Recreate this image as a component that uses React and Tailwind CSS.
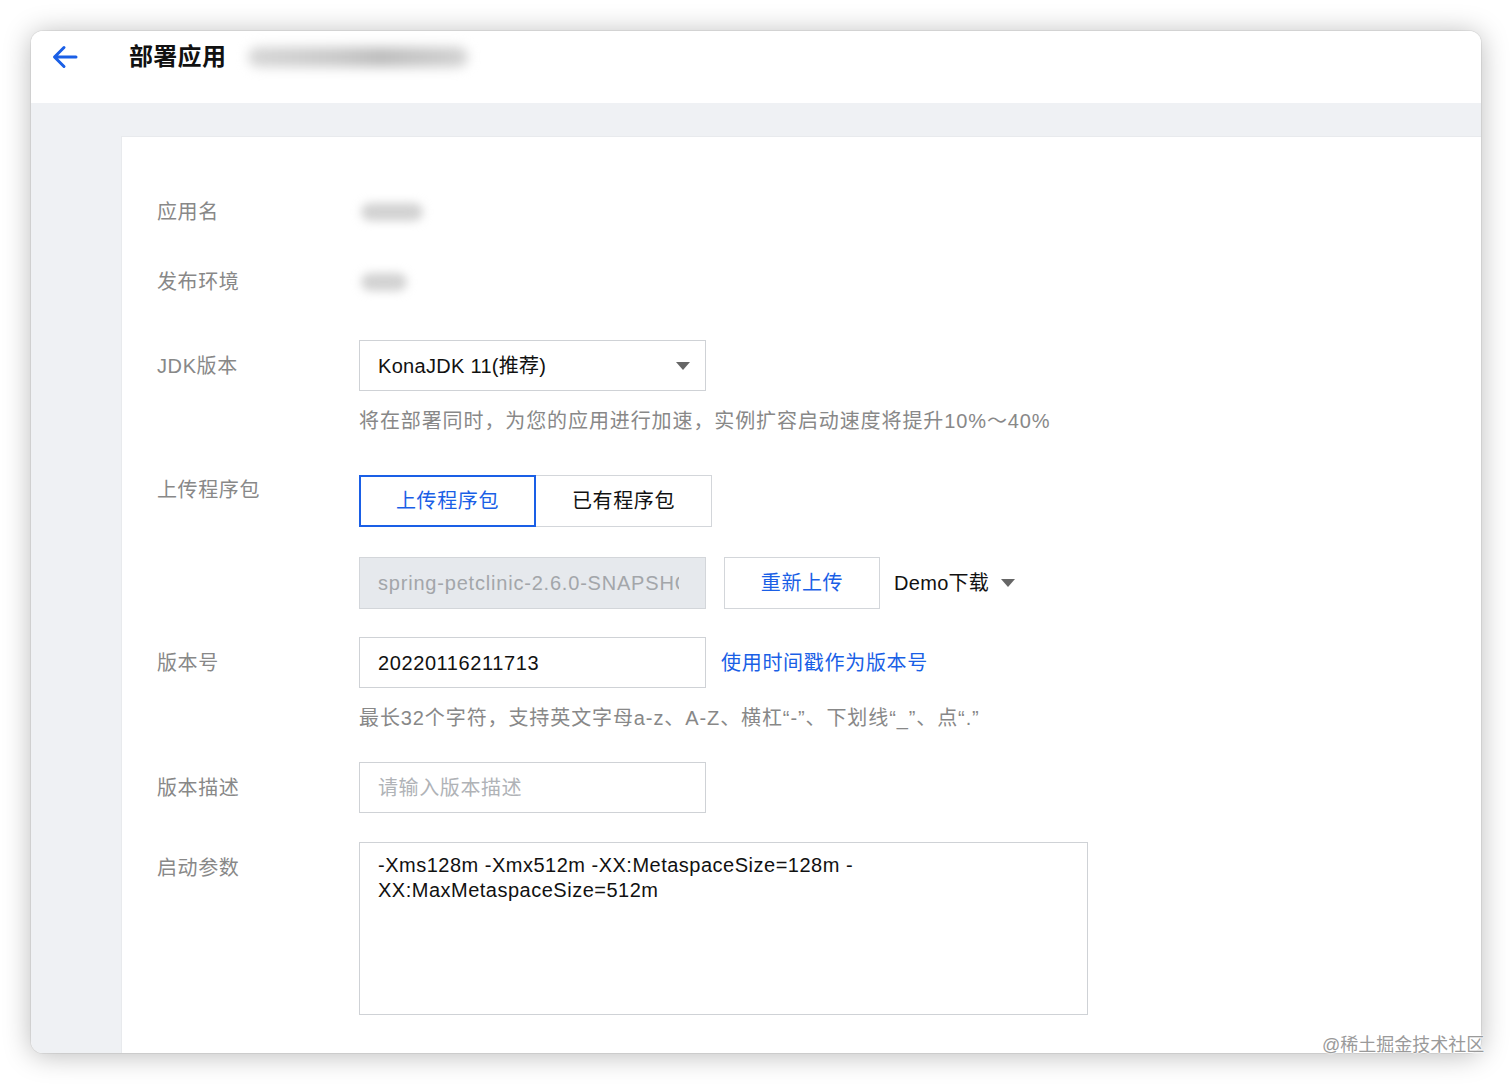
import React from "react";

const FONT = { fontFamily: '"Liberation Sans", "Noto Sans CJK SC", sans-serif' };

function Caret({ className = "" }) {
  return (
    <svg width="14" height="8" viewBox="0 0 14 8" className={className}>
      <path d="M0 0 L14 0 L7 8 Z" fill="#666" />
    </svg>
  );
}

function Label({ children, className = "" }) {
  return (
    <div className={`w-[202px] shrink-0 text-[20px] leading-[28px] text-[#888] tracking-[0.6px] ${className}`}>{children}</div>
  );
}

export default function App() {
  return (
    <div className="w-[1512px] h-[1084px] bg-white p-[31px] relative" style={FONT}>
      <div className="w-full h-full rounded-[12px] overflow-hidden bg-white flex flex-col shadow-[0_2px_28px_rgba(0,0,0,0.28),0_0_0_1px_rgba(0,0,0,0.06)]">
        {/* header */}
        <div className="h-[72px] shrink-0 bg-white flex items-start pt-[12px] pl-[21px]">
          <div className="h-[28px] flex items-center">
            <svg width="26" height="24" viewBox="0 0 26 24" fill="none">
              <path d="M24 12 H3 M12 2.5 L2.5 12 L12 21.5" stroke="#1a5fe6" strokeWidth="3" strokeLinecap="round" strokeLinejoin="round" />
            </svg>
          </div>
          <div className="ml-[51px] h-[28px] flex items-center text-[24px] font-bold text-[#111] leading-[28px] tracking-[0.3px]">部署应用</div>
          <div className="ml-[22px] h-[28px] flex items-center">
            <div className="w-[220px] h-[20px] rounded-full bg-[linear-gradient(90deg,#d6d6d6,#c9c9c9_40%,#bdbdbd_60%,#d2d2d2)] blur-[6px]"></div>
          </div>
        </div>

        {/* body */}
        <div className="flex-1 bg-[#eff1f4] pt-[34px] pl-[91px] flex">
          <div className="flex-1 bg-white pl-[35px] pt-[61px] shadow-[0_0_0_1px_#e8eaed]">
            {/* 应用名 */}
            <div className="flex items-center h-[28px]">
              <Label>应用名</Label>
              <div className="w-[62px] h-[18px] rounded-full bg-[#d2d2d2] blur-[5px] ml-[2px]"></div>
            </div>
            {/* 发布环境 */}
            <div className="flex items-center h-[28px] mt-[42px]">
              <Label>发布环境</Label>
              <div className="w-[46px] h-[18px] rounded-full bg-[#d2d2d2] blur-[5px] ml-[2px]"></div>
            </div>
            {/* JDK */}
            <div className="flex items-start mt-[44px]">
              <Label className="h-[51px] flex items-center">JDK版本</Label>
              <div>
                <div className="w-[347px] h-[51px] border border-[#cfd2d6] pl-[18px] pr-[15px] flex items-center justify-between text-[20px] text-[#111] tracking-[0.3px]">
                  <span>KonaJDK 11(推荐)</span>
                  <Caret />
                </div>
                <div className="mt-[16px] text-[20px] leading-[28px] text-[#888] tracking-[0.9px] whitespace-nowrap">将在部署同时，为您的应用进行加速，实例扩容启动速度将提升10%～40%</div>
              </div>
            </div>
            {/* 上传程序包 */}
            <div className="flex items-start mt-[40px]">
              <Label className="pt-[1px]">上传程序包</Label>
              <div className="flex">
                <div className="w-[177px] h-[52px] border-2 border-[#1a5fe6] flex items-center justify-center text-[20px] text-[#1a5fe6] tracking-[0.6px]">上传程序包</div>
                <div className="w-[176px] h-[52px] border border-l-0 border-[#d3d6da] flex items-center justify-center text-[20px] text-[#111] tracking-[0.6px]">已有程序包</div>
              </div>
            </div>
            {/* file row */}
            <div className="flex items-center mt-[30px]">
              <div className="w-[202px] shrink-0"></div>
              <div className="w-[347px] h-[52px] bg-[#e6e9ed] border border-[#d3d6da] pl-[18px] pr-[26px] flex items-center">
                <div className="overflow-hidden whitespace-nowrap text-[20px] text-[#a3a6aa] tracking-[0.8px]">spring-petclinic-2.6.0-SNAPSHOT.jar</div>
              </div>
              <div className="ml-[18px] w-[156px] h-[52px] border border-[#d3d6da] flex items-center justify-center text-[20px] text-[#1a5fe6] tracking-[0.6px]">重新上传</div>
              <div className="ml-[14px] flex items-center text-[20px] text-[#111] tracking-[0.3px]">
                <span>Demo下载</span>
                <Caret className="ml-[12px]" />
              </div>
            </div>
            {/* 版本号 */}
            <div className="flex items-start mt-[28px]">
              <Label className="h-[51px] flex items-center">版本号</Label>
              <div>
                <div className="flex items-center">
                  <div className="w-[347px] h-[51px] border border-[#cfd2d6] pl-[18px] flex items-center text-[20px] text-[#111] tracking-[0.6px]">20220116211713</div>
                  <div className="ml-[15px] text-[20px] text-[#1a5fe6] tracking-[0.7px]">使用时间戳作为版本号</div>
                </div>
                <div className="mt-[16px] text-[20px] leading-[28px] text-[#888] tracking-[0.9px] whitespace-nowrap">最长32个字符，支持英文字母a-z、A-Z、横杠“-”、下划线“_”、点“.”</div>
              </div>
            </div>
            {/* 版本描述 */}
            <div className="flex items-center mt-[30px]">
              <Label className="h-[51px] flex items-center">版本描述</Label>
              <div className="w-[347px] h-[51px] border border-[#cfd2d6] pl-[18px] flex items-center text-[20px] text-[#b0b3b7] tracking-[0.6px]">请输入版本描述</div>
            </div>
            {/* 启动参数 */}
            <div className="flex items-start mt-[29px]">
              <Label className="pt-[12px]">启动参数</Label>
              <div className="w-[729px] h-[173px] border border-[#cfd2d6] pl-[18px] pt-[10px] text-[20px] leading-[25px] text-[#111] tracking-[0.5px]">
                -Xms128m -Xmx512m -XX:MetaspaceSize=128m -<br />XX:MaxMetaspaceSize=512m
              </div>
            </div>
          </div>
        </div>
      </div>
      {/* watermark */}
      <div
        className="absolute left-[1322px] top-[1032px] text-[18px] leading-[26px] text-[#9a9a9a] whitespace-nowrap"
        style={{ textShadow: "0 0 2px #fff, 0 0 2px #fff, 0 0 2px #fff" }}
      >
        @稀土掘金技术社区
      </div>
    </div>
  );
}
